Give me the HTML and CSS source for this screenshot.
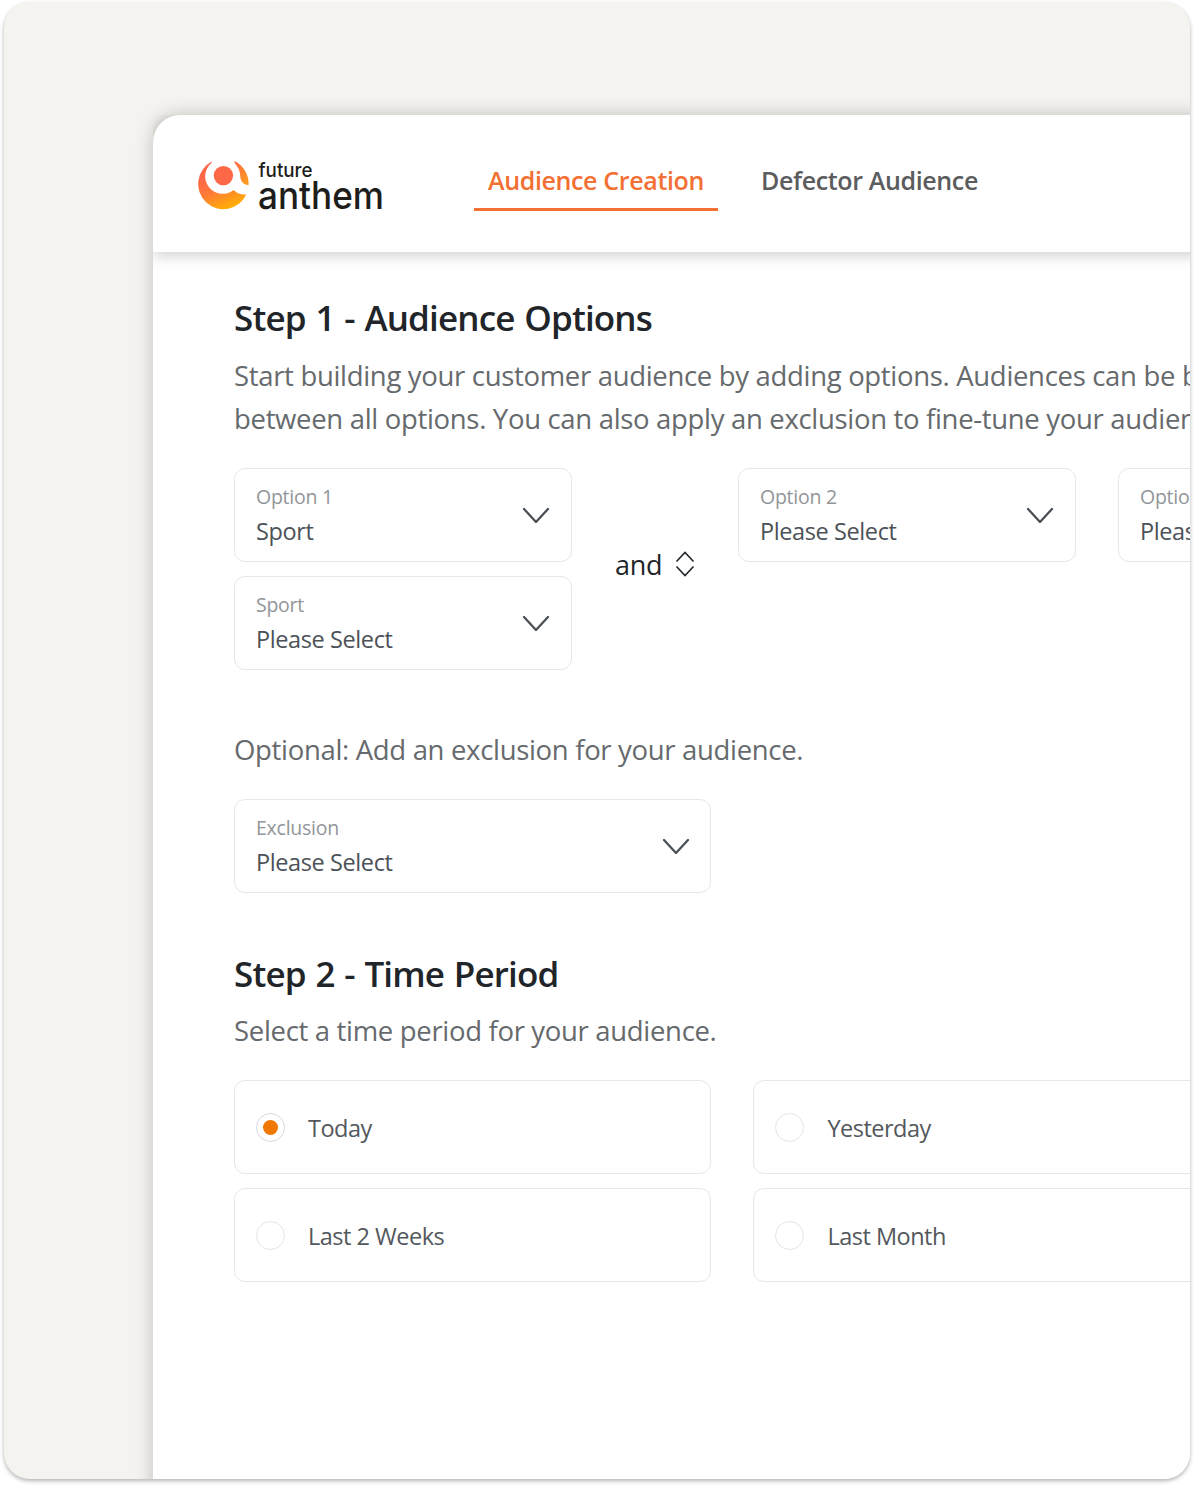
FILE: index.html
```html
<!DOCTYPE html>
<html lang="en">

<head>
    <meta charset="UTF-8">
    <meta name="viewport" content="width=device-width, initial-scale=1.0">
    <title>Audience Creation</title>
    <link rel="stylesheet" href="styles.css">
</head>

<body>
    <svg class="hidden">
        <symbol id="chevron" viewBox="0 0 28 18">
            <path d="M2 3 L14 16 L26 3" fill="none" stroke="currentColor" stroke-width="2.3" stroke-linecap="round" stroke-linejoin="round" />
        </symbol>
    </svg>

    <div class="frame">
        <div class="window">
            <header class="header">
                <svg class="logo" width="190" height="54" viewBox="0 0 190 54">
                    <defs>
                        <linearGradient id="sun" gradientUnits="userSpaceOnUse" x1="19" y1="14" x2="33" y2="49">
                            <stop offset="0" stop-color="#ff6846" />
                            <stop offset="0.4" stop-color="#ff7a38" />
                            <stop offset="1" stop-color="#ffb300" />
                        </linearGradient>
                        <linearGradient id="ray" x1="0" y1="0" x2="0.6" y2="1">
                            <stop offset="0" stop-color="#ff6846" />
                            <stop offset="1" stop-color="#ff9a20" />
                        </linearGradient>
                    </defs>
                    <path fill="url(#sun)" d="M13.7 1.6 A25.2 25.2 0 1 0 48.3 34.4 C43.5 34.8 39 33.6 35.6 30 A17.4 17.4 0 0 1 13.7 2.8 Z" />
                    <path fill="url(#ray)" d="M36.4 1.1 A25.2 25.2 0 0 1 50.6 25.2 C45.2 24.6 42.4 21.4 42.2 15.5 C42 9.5 39.5 7 36.4 2.4 Z" />
                    <circle cx="25.4" cy="15.6" r="9.7" fill="#ff6846" />
                    <text class="logo-text" x="60.5" y="16.8" font-size="20" textLength="54" lengthAdjust="spacingAndGlyphs">future</text>
                    <text class="logo-text" x="60" y="49" font-size="38" textLength="126" lengthAdjust="spacingAndGlyphs">anthem</text>
                </svg>
                <nav class="nav">
                    <a class="nav-link active">Audience Creation</a>
                    <a class="nav-link">Defector Audience</a>
                </nav>
            </header>

            <main class="content">
                <h2>Step 1 - Audience Options</h2>
                <p class="desc">Start building your customer audience by adding options. Audiences can be built<br>between all options. You can also apply an exclusion to fine-tune your audience.</p>

                <div class="options">
                    <div class="option-col">
                        <div class="select">
                            <div>
                                <div class="label">Option 1</div>
                                <div class="value">Sport</div>
                            </div>
                            <svg class="chevron"><use href="#chevron" /></svg>
                        </div>
                        <div class="select">
                            <div>
                                <div class="label">Sport</div>
                                <div class="value">Please Select</div>
                            </div>
                            <svg class="chevron"><use href="#chevron" /></svg>
                        </div>
                    </div>
                    <div class="operator">
                        <span>and</span>
                        <svg width="20" height="26" viewBox="0 0 20 26" fill="none" stroke="currentColor" stroke-width="1.6">
                            <path d="M1.5 10.5 L10 1.5 L18.5 10.5 M1.5 15.5 L10 24.5 L18.5 15.5" />
                        </svg>
                    </div>
                    <div class="option-col">
                        <div class="select">
                            <div>
                                <div class="label">Option 2</div>
                                <div class="value">Please Select</div>
                            </div>
                            <svg class="chevron"><use href="#chevron" /></svg>
                        </div>
                    </div>
                    <div class="option-col">
                        <div class="select">
                            <div>
                                <div class="label">Option 3</div>
                                <div class="value">Please Select</div>
                            </div>
                            <svg class="chevron"><use href="#chevron" /></svg>
                        </div>
                    </div>
                </div>

                <p class="desc exclusion-text">Optional: Add an exclusion for your audience.</p>
                <div class="select exclusion">
                    <div>
                        <div class="label">Exclusion</div>
                        <div class="value">Please Select</div>
                    </div>
                    <svg class="chevron"><use href="#chevron" /></svg>
                </div>

                <h2 class="step-two">Step 2 - Time Period</h2>
                <p class="desc period-text">Select a time period for your audience.</p>
                <div class="periods">
                    <div class="period"><span class="radio checked"></span><span class="period-name">Today</span></div>
                    <div class="period"><span class="radio"></span><span class="period-name">Yesterday</span></div>
                    <div class="period"><span class="radio"></span><span class="period-name">Last 2 Weeks</span></div>
                    <div class="period"><span class="radio"></span><span class="period-name">Last Month</span></div>
                </div>
            </main>
        </div>
    </div>
</body>

</html>
```
FILE: styles.css
```css
* {
    box-sizing: border-box;
}

body {
    font-family: "Segoe UI", "Open Sans", "Noto Sans", sans-serif;
    margin: 0;
    padding: 2px 4px 6px;
    height: 1485px;
    background-color: #fff;
    overflow: hidden;
}

.hidden {
    display: none;
}

.frame {
    height: 1477px;
    padding: 113px 0 0 149px;
    overflow: hidden;
    background-color: #f4f3ef;
    border-radius: 26px;
    box-shadow: 0 2px 4px rgba(0, 0, 0, 0.3);
}

.window {
    width: 1400px;
    height: 1500px;
    background-color: #fff;
    border-radius: 27px 0 0 0;
    box-shadow: 0 0 18px rgba(0, 0, 0, 0.22);
}

.header {
    display: flex;
    height: 137px;
    padding-left: 45px;
    border-radius: 27px 0 0 0;
    box-shadow: 0 4px 14px rgba(0, 0, 0, 0.18);
    clip-path: inset(0 0 -25px 0);
}

.logo {
    margin-top: 45px;
}

.logo-text {
    font-family: Inter, sans-serif;
    font-weight: 500;
    fill: #1d1d1b;
}

.nav {
    display: flex;
    align-items: flex-start;
    gap: 29px;
    margin: 45px 0 0 86px;
}

.nav-link {
    height: 51px;
    padding: 0 14px;
    font-size: 25px;
    font-weight: 600;
    line-height: 40px;
    letter-spacing: -0.36px;
    white-space: nowrap;
    color: #5a5c5e;
}

.nav-link.active {
    color: #f37034;
    border-bottom: 3px solid #f37034;
}

.content {
    padding: 44px 0 0 81px;
}

h2 {
    margin: 0;
    font-size: 35px;
    font-weight: 600;
    line-height: 43px;
    letter-spacing: -0.85px;
    word-spacing: 1.5px;
    color: #212529;
}

.desc {
    margin: 15px 0 0;
    font-size: 27.5px;
    line-height: 43px;
    letter-spacing: -0.32px;
    white-space: nowrap;
    color: #666a6d;
}

.options {
    display: flex;
    gap: 43px;
    margin-top: 28px;
}

.option-col {
    display: flex;
    flex-direction: column;
    flex: none;
    gap: 14px;
    width: 338px;
}

.option-col:last-child {
    margin-left: -1px;
}

.select {
    display: flex;
    align-items: center;
    justify-content: space-between;
    height: 94px;
    padding: 0 21px;
    border: 1.5px solid #e6e7ea;
    border-radius: 11px;
}

.label {
    font-size: 19.5px;
    line-height: 34px;
    letter-spacing: -0.25px;
    color: #929598;
}

.value {
    margin: -1px 0 2px;
    font-size: 23.5px;
    line-height: 36px;
    letter-spacing: -0.4px;
    color: #4c5157;
}

.chevron {
    width: 28px;
    height: 18px;
    color: #495057;
}

.operator {
    display: flex;
    align-items: center;
    gap: 13px;
    width: 80px;
    padding-bottom: 10px;
    font-size: 27px;
    letter-spacing: -0.3px;
    color: #212529;
}

.operator svg {
    flex: none;
}

.exclusion-text {
    margin-top: 58px;
}

.exclusion {
    width: 477px;
    margin-top: 28px;
    padding-right: 20px;
}

.step-two {
    margin-top: 59px;
}

.period-text {
    margin-top: 14px;
}

.periods {
    display: grid;
    grid-template-columns: 477px 477px;
    gap: 14px 42.4px;
    margin-top: 28px;
}

.period {
    display: flex;
    align-items: center;
    gap: 23px;
    height: 94px;
    padding-left: 21px;
    border: 1.5px solid #e6e7ea;
    border-radius: 11px;
}

.period-name {
    padding-top: 2px;
    font-size: 23.5px;
    letter-spacing: -0.5px;
    color: #53585d;
}

.radio {
    display: flex;
    align-items: center;
    justify-content: center;
    width: 29px;
    height: 29px;
    border: 1px solid #e2e4e8;
    border-radius: 50%;
}

.radio.checked {
    border-color: #d5d8df;
}

.radio.checked::before {
    content: "";
    width: 15px;
    height: 15px;
    border-radius: 50%;
    background-color: #f07800;
}
```
